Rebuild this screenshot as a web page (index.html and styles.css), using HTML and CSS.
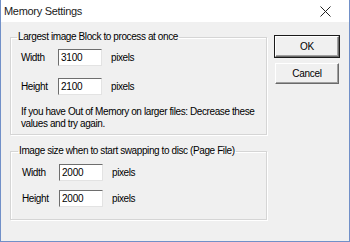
FILE: index.html
```html
<!DOCTYPE html>
<html lang="en">
<head>
  <meta charset="UTF-8" />
  <title>Memory Settings</title>
  <link rel="stylesheet" href="styles.css">
</head>
<body>

<div class="window">
  <div class="titlebar">
    <span class="title">Memory Settings</span>
    <svg class="close" width="11" height="11" viewBox="0 0 11 11">
      <path d="M0.5 0.5 L10.5 10.5 M10.5 0.5 L0.5 10.5" stroke="#222" stroke-width="1" fill="none"/>
    </svg>
  </div>

  <div class="content">
    <div class="groups">
      <fieldset class="group group-block">
        <legend>Largest image Block to process at once</legend>
        <div class="row">
          <label>Width</label>
          <input type="text" value="3100">
          <span class="unit">pixels</span>
        </div>
        <div class="row">
          <label>Height</label>
          <input type="text" value="2100">
          <span class="unit">pixels</span>
        </div>
        <p class="note">If you have Out of Memory on larger files: Decrease these values and try again.</p>
      </fieldset>

      <fieldset class="group group-swap">
        <legend>Image size when to start swapping to disc (Page File)</legend>
        <div class="row">
          <label>Width</label>
          <input type="text" value="2000">
          <span class="unit">pixels</span>
        </div>
        <div class="row">
          <label>Height</label>
          <input type="text" value="2000">
          <span class="unit">pixels</span>
        </div>
      </fieldset>
    </div>

    <div class="buttons">
      <button class="default">OK</button>
      <button>Cancel</button>
    </div>
  </div>
</div>

</body>
</html>
```

FILE: styles.css
```css
* { box-sizing: border-box; margin: 0; padding: 0; }
body {
  font-family: 'Liberation Sans', Arial, sans-serif;
  font-size: 10px;
  letter-spacing: -0.4px;
  color: #000;
  background: #f0f0f0;
}

.window {
  width: 350px;
  height: 242px;
  background: #f0f0f0;
  border-left: 1px solid #7190c8;
  border-right: 1px solid #7190c8;
  border-bottom: 1px solid #7190c8;
}

.titlebar {
  height: 22px;
  background: #fff;
  display: flex;
  align-items: center;
  justify-content: space-between;
  padding: 0 18px 0 3px;
}

.title {
  font-size: 11px;
  letter-spacing: -0.3px;
  color: #1a1a1a;
}

.content {
  display: flex;
  gap: 8px;
  padding: 9px 0 0 9px;
}

.groups {
  display: flex;
  flex-direction: column;
  gap: 10px;
}

.group {
  width: 257px;
  border: 1px solid #d5d5d5;
  box-shadow: inset 1px 1px 0 #fff, 1px 1px 0 #fff;
  padding: 6px 0 0 10px;
}

.group-block { height: 104px; }
.group-swap { height: 75px; padding-top: 7px; padding-left: 11px; }

legend {
  line-height: 12px;
  padding: 0 1px;
  margin-left: -4px;
}

.row {
  display: flex;
  align-items: center;
  height: 17px;
  margin-bottom: 12px;
}
.group-swap .row { margin-bottom: 9px; }

.row label { width: 37px; }

.row input {
  width: 44px;
  height: 17px;
  font-family: inherit;
  font-size: 10px;
  letter-spacing: -0.2px;
  padding: 0 2px;
  background: #fff;
  border: 1px solid #abadb3;
  border-top-color: #6e6e6e;
  border-left-color: #6e6e6e;
  border-bottom-color: #e3e3e3;
  border-right-color: #e3e3e3;
  outline: none;
}

.unit { margin-left: 9px; }

.note {
  line-height: 12px;
  margin-top: -1px;
  width: 240px;
}

.buttons {
  display: flex;
  flex-direction: column;
  gap: 6px;
  padding-top: 5px;
}

button {
  width: 64px;
  height: 21px;
  font-family: inherit;
  font-size: 10px;
  letter-spacing: -0.3px;
  background: #f0f0f0;
  border: 1px solid #fff;
  border-right-color: #6a6a6a;
  border-bottom-color: #6a6a6a;
  box-shadow: inset -1px -1px 0 #a0a0a0;
}

button.default {
  border: 1px solid #fff;
  border-right-color: #6a6a6a;
  border-bottom-color: #6a6a6a;
  outline: 1px solid #1a1a1a;
}
```
